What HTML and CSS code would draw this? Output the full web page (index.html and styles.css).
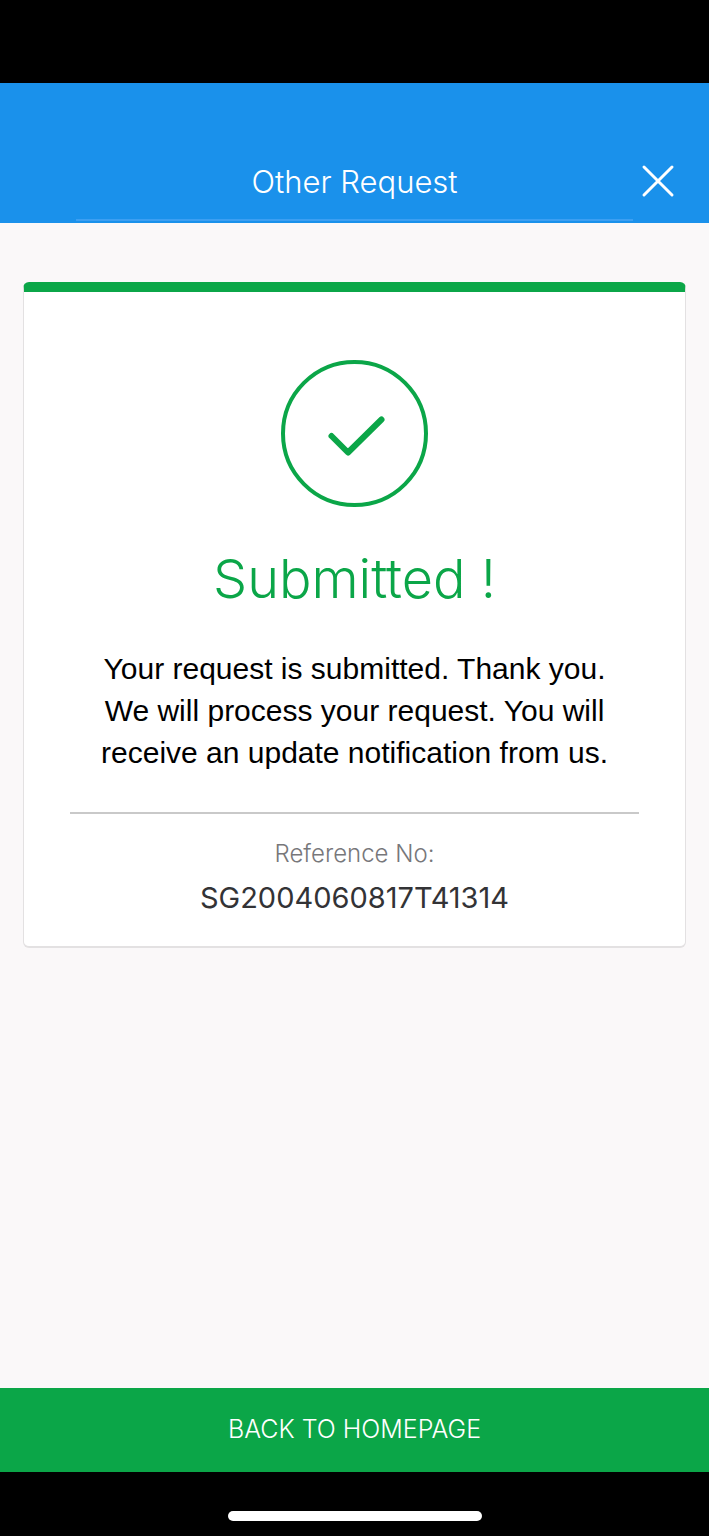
FILE: index.html
```html
<!DOCTYPE html>
<html lang="en">
<head>
  <meta charset="UTF-8" />
  <meta name="viewport" content="width=device-width, initial-scale=1.0"/>
  <title>Other Request</title>
  <link rel="stylesheet" href="styles.css">
</head>
<body>
  <div class="status-bar"></div>

  <header class="header">
    <h1 class="header-title">Other Request</h1>
    <button class="close" type="button" aria-label="Close">
      <svg width="34" height="34" viewBox="0 0 34 34" fill="none" stroke="#fff" stroke-width="3" stroke-linecap="round">
        <path d="M3 3L31 31M31 3L3 31"/>
      </svg>
    </button>
  </header>

  <main class="content">
    <section class="card">
      <svg class="check" width="147" height="147" viewBox="0 0 147 147" fill="none" stroke="#0ba648">
        <circle cx="73.5" cy="73.5" r="71.5" stroke-width="4"/>
        <path d="M50.5 76L67 92.5L100.5 59.5" stroke-width="6" stroke-linecap="round" stroke-linejoin="round"/>
      </svg>
      <h2 class="card-title">Submitted !</h2>
      <p class="message">Your request is submitted. Thank you.<br>We will process your request. You will<br>receive an update notification from us.</p>
      <div class="reference">
        <p class="reference-label">Reference No:</p>
        <p class="reference-no">SG2004060817T41314</p>
      </div>
    </section>
  </main>

  <button class="back" type="button">BACK TO HOMEPAGE</button>
  <footer class="home-bar">
    <div class="home-indicator"></div>
  </footer>
</body>
</html>
```

FILE: styles.css
```css
* {
  box-sizing: border-box;
}
body {
  display: flex;
  flex-direction: column;
  min-height: 100vh;
  margin: 0;
  font-family: Inter, "Liberation Sans", sans-serif;
  background: #faf8f9;
}
h1, h2, p {
  margin: 0;
}
button {
  padding: 0;
  border: none;
  font-family: inherit;
  cursor: pointer;
}
.status-bar {
  height: 83px;
  background: #000;
}
.header {
  display: grid;
  grid-template-columns: 76px 1fr 76px;
  align-items: end;
  height: 140px;
  padding-bottom: 2px;
  background: #1a91eb;
}
.header-title {
  grid-column: 2;
  padding-bottom: 17px;
  border-bottom: 2px solid #3c9ff2;
  color: #fff;
  font-size: 31px;
  font-weight: 300;
  line-height: 40px;
  text-align: center;
}
.close {
  height: 34px;
  margin: 0 0 23px 8px;
  justify-self: start;
  background: none;
}
.close svg {
  display: block;
}
.content {
  flex: 1;
  padding: 59px 23px;
}
.card {
  padding: 68px 46px 28px;
  border: 1px solid #e3e1e2;
  border-top: 10px solid #0ba648;
  border-bottom: 2px solid #e3e1e2;
  border-radius: 6px;
  background: #fff;
  text-align: center;
}
.check {
  display: block;
  margin: 0 auto;
}
.card-title {
  margin-top: 39px;
  color: #0ba648;
  font-size: 54px;
  font-weight: 300;
  line-height: 66px;
}
.message {
  margin-top: 36px;
  color: #000;
  font-family: "Liberation Sans", Arial, sans-serif;
  font-size: 30px;
  line-height: 42px;
}
.reference {
  margin-top: 38px;
  padding-top: 24px;
  border-top: 2px solid #c9c9c9;
}
.reference-label {
  color: #77777a;
  font-size: 24px;
  font-weight: 300;
  line-height: 32px;
}
.reference-no {
  margin-top: 8px;
  color: #333336;
  font-size: 29px;
  line-height: 40px;
}
.back {
  height: 84px;
  padding-bottom: 2px;
  background: #0ba648;
  color: #fff;
  font-size: 25px;
  font-weight: 300;
}
.home-bar {
  height: 64px;
  padding-top: 39px;
  background: #000;
}
.home-indicator {
  width: 254px;
  height: 10px;
  margin: 0 auto;
  border-radius: 5px;
  background: #fff;
}
```
